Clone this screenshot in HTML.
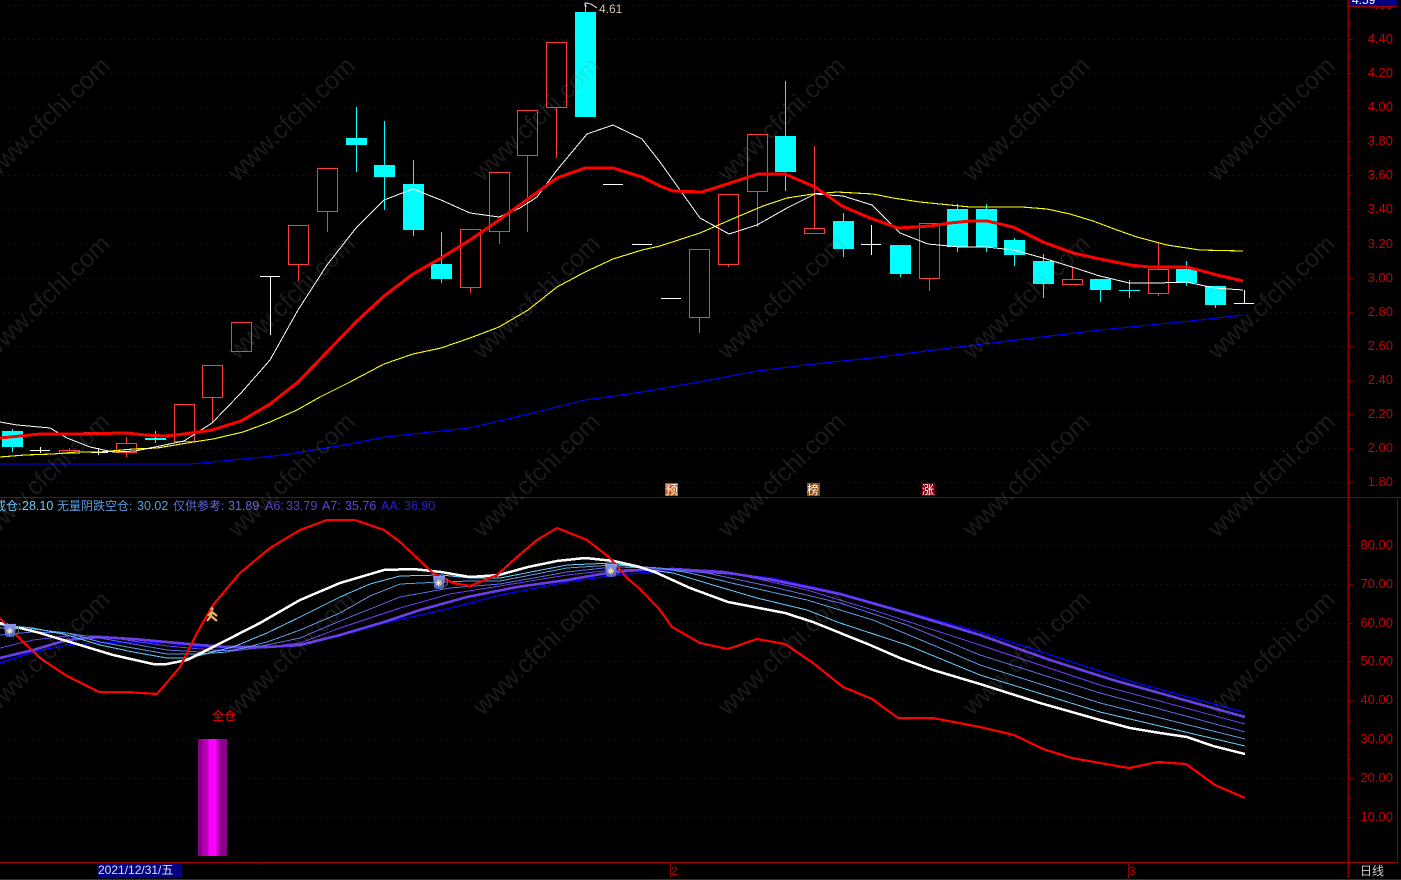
<!DOCTYPE html>
<html>
<head>
<meta charset="utf-8">
<style>
html,body{margin:0;padding:0;background:#000;width:1401px;height:880px;overflow:hidden}
svg{display:block;font-family:"Liberation Sans","Noto Sans CJK SC",sans-serif}
.grid line{stroke:#7a0000;stroke-width:1;stroke-dasharray:1 5}
.wm text{font-size:25px;fill:rgba(135,135,135,.2);text-anchor:middle}
.r rect{fill:#000;stroke:#ff3c3c;stroke-width:1}
.r line{stroke:#ff3c3c;stroke-width:1}
.c rect{fill:#00ffff;stroke:none}
.c line{stroke:#00ffff;stroke-width:1}
.d line{stroke:#fff;stroke-width:1}
.cx line{stroke:#00ffff;stroke-width:1}
.r,.c,.d,.cx,.ax{shape-rendering:crispEdges}
polyline{fill:none;stroke-linejoin:round;shape-rendering:crispEdges}
.ax line{stroke:#8a0000;stroke-width:1}
.ylab text{font-size:13px;fill:#c80000;text-anchor:end}
.leg text{font-size:12px}
.leg .n{font-size:12.5px}
</style>
</head>
<body>
<svg width="1401" height="880" viewBox="0 0 1401 880" xmlns="http://www.w3.org/2000/svg">
<rect width="1401" height="880" fill="#000"/>

<g class="grid">
<line x1="3" x2="1346" y1="5.5" y2="5.5"/><line x1="3" x2="1346" y1="39.5" y2="39.5"/><line x1="3" x2="1346" y1="73.5" y2="73.5"/><line x1="3" x2="1346" y1="107.5" y2="107.5"/><line x1="3" x2="1346" y1="141.5" y2="141.5"/><line x1="3" x2="1346" y1="175.5" y2="175.5"/><line x1="3" x2="1346" y1="209.5" y2="209.5"/><line x1="3" x2="1346" y1="243.5" y2="243.5"/><line x1="3" x2="1346" y1="278.5" y2="278.5"/><line x1="3" x2="1346" y1="312.5" y2="312.5"/><line x1="3" x2="1346" y1="346.5" y2="346.5"/><line x1="3" x2="1346" y1="380.5" y2="380.5"/><line x1="3" x2="1346" y1="414.5" y2="414.5"/><line x1="3" x2="1346" y1="448.5" y2="448.5"/><line x1="3" x2="1346" y1="482.5" y2="482.5"/>
<line x1="3" x2="1346" y1="545.5" y2="545.5"/><line x1="3" x2="1346" y1="584.5" y2="584.5"/><line x1="3" x2="1346" y1="623.5" y2="623.5"/><line x1="3" x2="1346" y1="661.5" y2="661.5"/><line x1="3" x2="1346" y1="700.5" y2="700.5"/><line x1="3" x2="1346" y1="739.5" y2="739.5"/><line x1="3" x2="1346" y1="778.5" y2="778.5"/><line x1="3" x2="1346" y1="817.5" y2="817.5"/>
</g>

<!-- candles -->
<g class="r">
<line x1="69.5" x2="69.5" y1="448" y2="451"/><rect x="59.5" y="450.5" width="20" height="3"/>
<line x1="126.5" x2="126.5" y1="437" y2="457"/><rect x="116.5" y="443.5" width="20" height="9"/>
<rect x="174.5" y="404.5" width="20" height="37"/>
<line x1="212.5" x2="212.5" y1="397" y2="423"/><rect x="202.5" y="365.5" width="20" height="32"/>
<rect x="231.5" y="322.5" width="20" height="29"/>
<line x1="298.5" x2="298.5" y1="264" y2="281"/><rect x="288.5" y="225.5" width="20" height="39"/>
<line x1="327.5" x2="327.5" y1="211" y2="232"/><rect x="317.5" y="168.5" width="20" height="43"/>
<line x1="470.5" x2="470.5" y1="287" y2="293"/><rect x="460.5" y="229.5" width="20" height="58"/>
<line x1="499.5" x2="499.5" y1="231" y2="244"/><rect x="489.5" y="172.5" width="20" height="59"/>
<line x1="527.5" x2="527.5" y1="156" y2="232"/><rect x="517.5" y="110.5" width="20" height="45"/>
<line x1="556.5" x2="556.5" y1="107" y2="158"/><rect x="546.5" y="42.5" width="20" height="65"/>
<line x1="699.5" x2="699.5" y1="317" y2="333"/><rect x="689.5" y="249.5" width="20" height="68"/>
<line x1="728.5" x2="728.5" y1="264" y2="267"/><rect x="718.5" y="194.5" width="20" height="70"/>
<line x1="757.5" x2="757.5" y1="191" y2="227"/><rect x="747.5" y="134.5" width="20" height="57"/>
<line x1="814.5" x2="814.5" y1="146" y2="228"/><rect x="804.5" y="228.5" width="20" height="5"/>
<line x1="929.5" x2="929.5" y1="279" y2="291"/><rect x="919.5" y="223.5" width="20" height="55"/>
<line x1="1072.5" x2="1072.5" y1="268" y2="279"/><rect x="1062.5" y="279.5" width="20" height="5"/>
<line x1="1158.5" x2="1158.5" y1="243" y2="296"/><rect x="1148.5" y="269.5" width="20" height="24"/>
</g>
<g class="c">
<line x1="12.5" x2="12.5" y1="429" y2="452"/><rect x="2" y="431" width="21" height="16"/>
<line x1="356.5" x2="356.5" y1="107" y2="172"/><rect x="346" y="138" width="21" height="7"/>
<line x1="384.5" x2="384.5" y1="121" y2="210"/><rect x="374" y="165" width="21" height="12"/>
<line x1="413.5" x2="413.5" y1="160" y2="236"/><rect x="403" y="184" width="21" height="46"/>
<line x1="441.5" x2="441.5" y1="232" y2="283"/><rect x="431" y="264" width="21" height="15"/>
<line x1="585.5" x2="585.5" y1="3" y2="12"/><rect x="575" y="12" width="21" height="105"/>
<line x1="785.5" x2="785.5" y1="81" y2="191"/><rect x="775" y="136" width="21" height="36"/>
<line x1="843.5" x2="843.5" y1="213" y2="257"/><rect x="833" y="221" width="21" height="28"/>
<line x1="900.5" x2="900.5" y1="274" y2="277"/><rect x="890" y="245" width="21" height="29"/>
<line x1="957.5" x2="957.5" y1="204" y2="252"/><rect x="947" y="209" width="21" height="38"/>
<line x1="986.5" x2="986.5" y1="204" y2="252"/><rect x="976" y="209" width="21" height="38"/>
<line x1="1014.5" x2="1014.5" y1="238" y2="266"/><rect x="1004" y="240" width="21" height="15"/>
<line x1="1043.5" x2="1043.5" y1="254" y2="298"/><rect x="1033" y="261" width="21" height="23"/>
<line x1="1100.5" x2="1100.5" y1="290" y2="302"/><rect x="1090" y="279" width="21" height="11"/>
<line x1="1186.5" x2="1186.5" y1="261" y2="286"/><rect x="1176" y="269" width="21" height="14"/>
<line x1="1215.5" x2="1215.5" y1="305" y2="308"/><rect x="1205" y="286" width="21" height="19"/>
<rect x="145" y="438" width="21" height="2"/><line x1="155.5" x2="155.5" y1="431" y2="443"/>
</g>
<g class="cx"><line x1="1119" x2="1140" y1="290.5" y2="290.5"/><line x1="1129.5" x2="1129.5" y1="280" y2="298"/></g>
<g class="d">
<line x1="30" x2="50" y1="450.5" y2="450.5"/><line x1="40.5" x2="40.5" y1="447" y2="453"/>
<line x1="91" x2="108" y1="452.5" y2="452.5"/><line x1="98.5" x2="98.5" y1="448" y2="455"/>
<line x1="260" x2="280" y1="276.5" y2="276.5"/><line x1="270.5" x2="270.5" y1="276" y2="335"/>
<line x1="603" x2="623" y1="184.5" y2="184.5"/>
<line x1="632" x2="652" y1="244.5" y2="244.5"/>
<line x1="661" x2="681" y1="298.5" y2="298.5"/>
<line x1="861" x2="881" y1="244.5" y2="244.5"/><line x1="871.5" x2="871.5" y1="225" y2="255"/>
<line x1="1234" x2="1254" y1="303.5" y2="303.5"/><line x1="1244.5" x2="1244.5" y1="290" y2="303"/>
</g>

<!-- main MAs -->
<polyline stroke="#0000ff" stroke-width="1.1" points="0,464 190,464 233,460 283,455 320,449 350,444 385,437 441,431 470,428 528,414 585,400 642,392 699,382 757,371 814,364 871,358 950,348 1000,342 1050,336 1100,330 1150,325 1200,320 1243,315"/>
<polyline stroke="#ffff00" stroke-width="1.1" points="0,457 25,455 53,454 77,452 100,452 133,449 157,448 187,443 213,439 243,432 270,422 297,410 320,397 350,382 384,364 413,354 441,348 470,338 499,327 528,310 557,287 585,272 613,259 642,250 660,246 700,233 737,217 763,206 787,198 813,194 837,192 873,194 893,198 920,202 950,205 970,207 1022,207 1047,209 1070,214 1093,221 1117,230 1137,237 1167,245 1200,250 1243,251"/>
<polyline stroke="#ffffff" stroke-width="1" points="0,422 17,425 50,428 67,438 90,447 113,452 135,451 155,447 184,441 212,423 241,393 270,360 298,310 327,265 356,228 384,200 413,189 441,200 470,213 499,217 520,208 537,197 557,170 587,134 613,125 642,139 660,162 680,190 700,218 729,234 757,225 787,208 815,194 843,196 872,205 900,233 928,244 960,247 986,247 1014,250 1043,258 1072,267 1100,276 1129,283 1158,283 1186,282 1215,288 1243,290"/>
<polyline stroke="#ff0000" stroke-width="3" points="0,438 40,434 70,434 127,433 145,435 165,436 184,434 212,430 241,421 270,404 298,382 327,352 356,322 384,296 413,274 441,258 470,240 499,220 528,199 557,178 585,168 613,168 642,177 660,186 673,191 702,192 730,183 758,174 785,174 815,187 842,206 870,218 898,228 930,226 950,223 970,221 987,221 1013,227 1043,242 1073,253 1100,259 1130,265 1150,267 1187,267 1217,275 1243,281"/>

<!-- 4.61 -->
<polyline stroke="#cfcfcf" stroke-width="1" points="585,3 591,4 597,8"/>
<polyline stroke="#cfcfcf" stroke-width="1" points="588,3 585,3 585,6 587,6"/>
<text x="599" y="13" font-size="12" fill="#d4c4b0">4.61</text>

<!-- badges -->
<rect x="665" y="483" width="13" height="13" fill="#c8500a"/>
<text x="665" y="494" font-size="12" fill="#fff" textLength="13" lengthAdjust="spacingAndGlyphs">预</text>
<rect x="807" y="483" width="13" height="13" fill="#8b4a10"/>
<text x="807" y="494" font-size="12" fill="#fff">榜</text>
<rect x="922" y="483" width="13" height="13" fill="#800012"/>
<text x="922" y="494" font-size="12" fill="#fff">涨</text>

<!-- lower lines -->
<polyline stroke="#0000ff" stroke-width="1.3" points="0,663 33,652 67,645 100,643 133,642 167,643 200,647 227,648 267,647 300,645 340,636 384,623 443,610 500,595 567,582 617,575 640,573 673,571 723,573 773,578 840,593 907,612 980,632 1060,658 1133,682 1243,712"/>
<polyline stroke="#6a3de8" stroke-width="2.6" points="0,658 33,650 67,640 100,637 133,639 167,642 200,645 227,647 267,647 300,645 340,635 384,622 420,610 467,597 517,587 567,580 613,572 640,570 673,569 723,572 773,580 840,594 907,613 980,635 1050,660 1113,680 1245,717"/>
<polyline stroke="#6a3de8" stroke-width="1" points="0,648 33,640 67,636 100,636 133,641 167,646 200,649 233,651 267,647 300,643 340,628 400,608 450,594 500,586 567,575 613,570 660,569 740,575 807,590 873,610 940,632 980,645 1100,685 1245,724"/>
<polyline stroke="#5a6be0" stroke-width="1" points="0,635 33,632 67,633 100,638 133,644 167,650 200,652 233,650 267,645 300,638 340,621 400,597 450,588 500,584 567,572 613,567 660,568 707,573 773,587 840,603 907,625 980,655 1100,693 1245,732"/>
<polyline stroke="#5b9de0" stroke-width="1" points="0,628 33,629 67,633 100,642 133,648 167,654 200,654 227,652 267,642 300,630 340,613 370,596 400,584 441,582 470,581 500,581 567,568 613,565 660,568 690,573 740,585 807,600 873,620 940,648 980,665 1100,703 1245,739"/>
<polyline stroke="#66ccff" stroke-width="1" points="0,625 33,628 67,635 100,645 133,652 167,658 190,658 213,652 233,647 267,633 300,617 340,597 370,584 400,576 441,575 470,578 500,578 567,565 613,563 650,570 673,573 723,588 757,598 807,610 840,623 907,645 980,675 1100,712 1245,746"/>
<polyline stroke="#ffffff" stroke-width="2.5" points="0,623 40,633 80,645 113,655 153,664 167,664 187,660 213,647 260,623 300,600 340,583 384,570 413,569 441,572 470,577 499,575 528,567 557,561 585,558 614,561 640,567 657,573 690,588 728,602 785,613 813,622 870,645 900,658 933,670 980,684 1040,703 1100,720 1130,728 1160,733 1187,737 1213,746 1245,754"/>
<polyline stroke="#ff0000" stroke-width="2.2" points="0,618 13,632 40,658 67,676 99,692 127,692 157,694 180,667 197,633 213,605 240,573 270,548 300,530 327,520 355,520 384,530 400,542 433,573 453,583 470,586 497,575 517,557 537,540 557,528 587,540 610,558 627,578 640,589 660,610 672,627 700,643 728,649 757,639 785,644 813,663 843,687 872,699 898,718 933,718 980,727 1014,735 1043,749 1072,758 1100,763 1129,768 1158,762 1186,764 1215,785 1245,798"/>

<!-- cups -->
<defs>
<linearGradient id="cup" x1="0" y1="0" x2="0" y2="1"><stop offset="0" stop-color="#8f9be8"/><stop offset="1" stop-color="#4a5bb8"/></linearGradient>
</defs>
<g id="cups">
<g transform="translate(4,624)"><path d="M0 0H12L11 11Q10.500 13 8 13H4Q1.500 13 1 11Z" fill="url(#cup)"/><path d="M5.700 3.500V10.500M2.500 7H9M3.500 4.800L8 9.200M8 4.800L3.500 9.200" stroke="#f4e8b0" stroke-width="1"/><path d="M12 3h2.500v5l-3 3" fill="none" stroke="#666" stroke-width="1"/></g>
<g transform="translate(433,576)"><path d="M0 0H12L11 11Q10.500 13 8 13H4Q1.500 13 1 11Z" fill="url(#cup)"/><path d="M5.700 3.500V10.500M2.500 7H9M3.500 4.800L8 9.200M8 4.800L3.500 9.200" stroke="#f4e8b0" stroke-width="1"/><path d="M12 3h2.500v5l-3 3" fill="none" stroke="#666" stroke-width="1"/></g>
<g transform="translate(605,564)"><path d="M0 0H12L11 11Q10.500 13 8 13H4Q1.500 13 1 11Z" fill="url(#cup)"/><path d="M5.700 3.500V10.500M2.500 7H9M3.500 4.800L8 9.200M8 4.800L3.500 9.200" stroke="#f4e8b0" stroke-width="1"/><path d="M12 3h2.500v5l-3 3" fill="none" stroke="#666" stroke-width="1"/></g>
</g>
<!-- person -->
<g>
<circle cx="212" cy="609" r="1.700" fill="#f0b060"/>
<path d="M212 611L211 616L207 621M211 616L217 621M212 612L217 616M211 612L208 616" fill="none" stroke="#f0b060" stroke-width="2.200"/>
</g>

<!-- 全仓 + bar -->
<text x="212" y="720" font-size="12" fill="#ff0000">全仓</text>
<defs>
<linearGradient id="bar" x1="0" y1="0" x2="1" y2="0">
<stop offset="0" stop-color="#8a008a"/><stop offset=".14" stop-color="#8a008a"/><stop offset=".14" stop-color="#a800a8"/><stop offset=".36" stop-color="#c000c0"/><stop offset=".36" stop-color="#ff00ff"/><stop offset=".64" stop-color="#ff00ff"/><stop offset=".64" stop-color="#c000c0"/><stop offset=".76" stop-color="#a800a8"/><stop offset=".76" stop-color="#8a008a"/><stop offset="1" stop-color="#8a008a"/>
</linearGradient>
</defs>
<rect x="198" y="739" width="29" height="117" fill="url(#bar)"/>

<!-- legend -->
<g class="leg">
<text x="-6" y="510" fill="#66ccff">戒仓:</text><text class="n" x="22" y="510" fill="#66ccff">28.10</text>
<text x="57" y="510" fill="#5b9de0">无量阴跌空仓:</text><text class="n" x="137" y="510" fill="#5b9de0">30.02</text>
<text x="173" y="510" fill="#5a6bd8">仅供参考:</text><text class="n" x="228" y="510" fill="#5a6bd8">31.89</text>
<text class="n" x="265" y="510" fill="#5b3fc8">A6:</text><text class="n" x="286" y="510" fill="#5b3fc8">33.79</text>
<text class="n" x="322" y="510" fill="#6a3de8">A7:</text><text class="n" x="345" y="510" fill="#6a3de8">35.76</text>
<text class="n" x="381" y="510" fill="#2a1fd8">AA:</text><text class="n" x="404" y="510" fill="#2a1fd8">36.90</text>
</g>

<!-- axes -->
<g class="ax">
<line x1="0" x2="1401" y1="497.5" y2="497.5"/>
<line x1="0" x2="1397" y1="862.5" y2="862.5" style="stroke:#a00000"/>
<line x1="1348.5" x2="1348.5" y1="0" y2="878" style="stroke-width:2"/>
<line x1="1397.5" x2="1397.5" y1="497" y2="863"/>
<line x1="670.5" x2="670.5" y1="863" y2="878"/>
<line x1="1128.5" x2="1128.5" y1="863" y2="878"/>
<line x1="261.5" x2="261.5" y1="863" y2="865"/>
<line x1="1348" x2="1353" y1="39.5" y2="39.5"/><line x1="1348" x2="1353" y1="73.5" y2="73.5"/><line x1="1348" x2="1353" y1="107.5" y2="107.5"/><line x1="1348" x2="1353" y1="141.5" y2="141.5"/><line x1="1348" x2="1353" y1="175.5" y2="175.5"/><line x1="1348" x2="1353" y1="209.5" y2="209.5"/><line x1="1348" x2="1353" y1="243.5" y2="243.5"/><line x1="1348" x2="1353" y1="278.5" y2="278.5"/><line x1="1348" x2="1353" y1="312.5" y2="312.5"/><line x1="1348" x2="1353" y1="346.5" y2="346.5"/><line x1="1348" x2="1353" y1="380.5" y2="380.5"/><line x1="1348" x2="1353" y1="414.5" y2="414.5"/><line x1="1348" x2="1353" y1="448.5" y2="448.5"/><line x1="1348" x2="1353" y1="482.5" y2="482.5"/>
<line x1="1348" x2="1351" y1="22.5" y2="22.5"/><line x1="1348" x2="1351" y1="56.5" y2="56.5"/><line x1="1348" x2="1351" y1="90.5" y2="90.5"/><line x1="1348" x2="1351" y1="124.5" y2="124.5"/><line x1="1348" x2="1351" y1="158.5" y2="158.5"/><line x1="1348" x2="1351" y1="192.5" y2="192.5"/><line x1="1348" x2="1351" y1="226.5" y2="226.5"/><line x1="1348" x2="1351" y1="261.5" y2="261.5"/><line x1="1348" x2="1351" y1="295.5" y2="295.5"/><line x1="1348" x2="1351" y1="329.5" y2="329.5"/><line x1="1348" x2="1351" y1="363.5" y2="363.5"/><line x1="1348" x2="1351" y1="397.5" y2="397.5"/><line x1="1348" x2="1351" y1="431.5" y2="431.5"/><line x1="1348" x2="1351" y1="465.5" y2="465.5"/>
<line x1="1348" x2="1353" y1="545.5" y2="545.5"/><line x1="1348" x2="1353" y1="584.5" y2="584.5"/><line x1="1348" x2="1353" y1="623.5" y2="623.5"/><line x1="1348" x2="1353" y1="661.5" y2="661.5"/><line x1="1348" x2="1353" y1="700.5" y2="700.5"/><line x1="1348" x2="1353" y1="739.5" y2="739.5"/><line x1="1348" x2="1353" y1="778.5" y2="778.5"/><line x1="1348" x2="1353" y1="817.5" y2="817.5"/>
<line x1="1348" x2="1351" y1="526.5" y2="526.5"/><line x1="1348" x2="1351" y1="565.5" y2="565.5"/><line x1="1348" x2="1351" y1="603.5" y2="603.5"/><line x1="1348" x2="1351" y1="642.5" y2="642.5"/><line x1="1348" x2="1351" y1="681.5" y2="681.5"/><line x1="1348" x2="1351" y1="720.5" y2="720.5"/><line x1="1348" x2="1351" y1="759.5" y2="759.5"/><line x1="1348" x2="1351" y1="798.5" y2="798.5"/>
</g>
<g class="ylab">
<text x="1393" y="9">4.60</text><text x="1393" y="43">4.40</text><text x="1393" y="77">4.20</text><text x="1393" y="111">4.00</text><text x="1393" y="145">3.80</text><text x="1393" y="179">3.60</text><text x="1393" y="213">3.40</text><text x="1393" y="248">3.20</text><text x="1393" y="282">3.00</text><text x="1393" y="316">2.80</text><text x="1393" y="350">2.60</text><text x="1393" y="384">2.40</text><text x="1393" y="418">2.20</text><text x="1393" y="452">2.00</text><text x="1393" y="486">1.80</text>
<text x="1393" y="549">80.00</text><text x="1393" y="588">70.00</text><text x="1393" y="627">60.00</text><text x="1393" y="665">50.00</text><text x="1393" y="704">40.00</text><text x="1393" y="743">30.00</text><text x="1393" y="782">20.00</text><text x="1393" y="821">10.00</text>
</g>
<rect x="1349" y="0" width="48" height="6" fill="#000080"/>
<rect x="1349" y="6" width="48" height="1" fill="#a00000"/>
<text x="1352" y="4" font-size="12" fill="#fff">4.59</text>

<!-- bottom -->
<rect x="97" y="863" width="85" height="15" fill="#000080"/>
<text x="98" y="874" font-size="12" fill="#e0e0e0">2021/12/31/五</text>
<text x="671" y="875" font-size="12" fill="#c80000">2</text>
<text x="1129" y="875" font-size="12" fill="#c80000">3</text>
<text x="1360" y="875" font-size="12" fill="#d0d0d0">日线</text>
<rect x="0" y="879" width="1401" height="1" fill="#333"/>

<!-- watermark -->
<g class="wm">
<text transform="translate(52,125) rotate(-44)">www.cfchi.com</text><text transform="translate(297,125) rotate(-44)">www.cfchi.com</text><text transform="translate(542,125) rotate(-44)">www.cfchi.com</text><text transform="translate(787,125) rotate(-44)">www.cfchi.com</text><text transform="translate(1032,125) rotate(-44)">www.cfchi.com</text><text transform="translate(1277,125) rotate(-44)">www.cfchi.com</text>
<text transform="translate(52,303) rotate(-44)">www.cfchi.com</text><text transform="translate(297,303) rotate(-44)">www.cfchi.com</text><text transform="translate(542,303) rotate(-44)">www.cfchi.com</text><text transform="translate(787,303) rotate(-44)">www.cfchi.com</text><text transform="translate(1032,303) rotate(-44)">www.cfchi.com</text><text transform="translate(1277,303) rotate(-44)">www.cfchi.com</text>
<text transform="translate(52,481) rotate(-44)">www.cfchi.com</text><text transform="translate(297,481) rotate(-44)">www.cfchi.com</text><text transform="translate(542,481) rotate(-44)">www.cfchi.com</text><text transform="translate(787,481) rotate(-44)">www.cfchi.com</text><text transform="translate(1032,481) rotate(-44)">www.cfchi.com</text><text transform="translate(1277,481) rotate(-44)">www.cfchi.com</text>
<text transform="translate(52,659) rotate(-44)">www.cfchi.com</text><text transform="translate(297,659) rotate(-44)">www.cfchi.com</text><text transform="translate(542,659) rotate(-44)">www.cfchi.com</text><text transform="translate(787,659) rotate(-44)">www.cfchi.com</text><text transform="translate(1032,659) rotate(-44)">www.cfchi.com</text><text transform="translate(1277,659) rotate(-44)">www.cfchi.com</text>
</g>
</svg>
</body>
</html>
